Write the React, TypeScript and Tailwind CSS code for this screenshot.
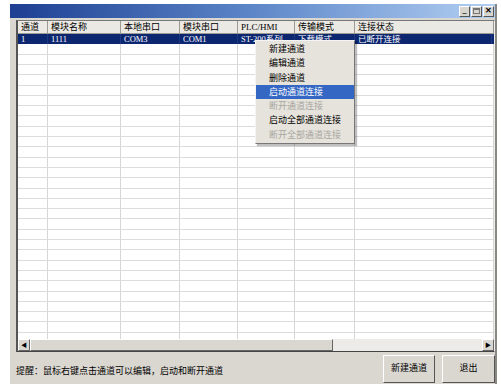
import React from "react"

const COLS = [
  { name: "通道", w: "w-[30px]" },
  { name: "模块名称", w: "w-[73px]" },
  { name: "本地串口", w: "w-[59px]" },
  { name: "模块串口", w: "w-[58px]" },
  { name: "PLC/HMI", w: "w-[57px]" },
  { name: "传输模式", w: "w-[60px]" },
  { name: "连接状态", w: "flex-1" },
]

const ROW = ["1", "1111", "COM3", "COM1", "ST-200系列", "下载模式", "已断开连接"]

const MENU = [
  { label: "新建通道" },
  { label: "编辑通道" },
  { label: "删除通道" },
  { label: "启动通道连接", active: true },
  { label: "断开通道连接", disabled: true },
  { label: "启动全部通道连接" },
  { label: "断开全部通道连接", disabled: true },
]

const font = "font-['Liberation_Serif','Noto_Sans_CJK_SC',serif]"

function TitleButton({ children }: { children: React.ReactNode }) {
  return (
    <div className="flex h-[11px] w-[11px] items-center justify-center border border-t-white border-l-white border-r-[#555] border-b-[#555] bg-[#d8d5ce] text-[8px] leading-none font-bold text-black">
      {children}
    </div>
  )
}

export default function App() {
  const emptyRows = Array.from({ length: 30 })

  return (
    <div className={`relative h-[387px] w-[501px] overflow-hidden bg-white ${font}`}>
      <div className="ml-[10px] mt-[4px] flex h-[380px] w-[487px] flex-col border-r-2 border-[#8a8883] bg-[#dad7d0]">
        {/* title bar */}
        <div className="flex h-[14px] items-center justify-end gap-[1px] bg-gradient-to-r from-[#1f3f92] via-[#5d86c8] to-[#b3d0f2] pr-[1px]">
          <TitleButton>_</TitleButton>
          <TitleButton>
            <span className="block h-[6px] w-[7px] border border-t-2 border-[#777]" />
          </TitleButton>
          <TitleButton>✕</TitleButton>
        </div>

        {/* list view */}
        <div className="ml-[6px] mt-[2px] flex h-[332px] w-[479px] flex-col border-l-2 border-t border-r border-b border-l-[#555] border-t-[#777] border-r-[#eee] border-b-[#444] bg-white">
          <div className="flex h-[13px] shrink-0 bg-[#ebe9e3] text-[9px] leading-[13px] text-black">
            {COLS.map((c) => (
              <div key={c.name} className={`${c.w} border-r border-b border-r-[#9d9a92] border-b-[#9d9a92] pl-[3px]`}>
                {c.name}
              </div>
            ))}
          </div>
          <div className="flex-1 overflow-hidden">
            <div className="flex h-[10.4px] bg-[#0c2670] text-[8.5px] leading-[10px] text-white">
              {COLS.map((c, i) => (
                <div key={c.name} className={`${c.w} border-r border-[#1c3880] pl-[3px] ${i === 6 ? "mr-[2px]" : ""}`}>
                  {ROW[i]}
                </div>
              ))}
            </div>
            {emptyRows.map((_, r) => (
              <div key={r} className="flex h-[10.3px] border-b border-[#dcdcdc]">
                {COLS.map((c) => (
                  <div key={c.name} className={`${c.w} border-r border-[#d6d6d6]`} />
                ))}
              </div>
            ))}
          </div>
          {/* horizontal scrollbar */}
          <div className="flex h-[12px] shrink-0 bg-[#ecebe7]">
            <div className="flex w-[12px] items-center justify-center border border-t-white border-l-white border-r-[#666] border-b-[#666] bg-[#dad7d0] text-[6px] text-black">◀</div>
            <div className="w-[303px] border border-t-white border-l-white border-r-[#666] border-b-[#666] bg-[#dad7d0]" />
            <div className="flex-1" />
            <div className="flex w-[12px] items-center justify-center border border-t-white border-l-white border-r-[#666] border-b-[#666] bg-[#dad7d0] text-[6px] text-black">▶</div>
          </div>
        </div>

        {/* footer */}
        <div className="ml-[6px] mt-[3px] flex items-center">
          <div className="flex-1 pt-[5px] text-[9px] text-black">提醒：鼠标右键点击通道可以编辑，启动和断开通道</div>
          <button className="flex h-[28px] w-[52px] items-center justify-center border border-t-white border-l-white border-r-[#555] border-b-[#555] bg-[#dad7d0] text-[9px] text-black">
            新建通道
          </button>
          <button className="ml-[7px] mr-[0px] flex h-[28px] w-[53px] items-center justify-center border border-t-white border-l-white border-r-[#555] border-b-[#555] bg-[#dad7d0] text-[9px] text-black">
            退出
          </button>
        </div>
      </div>

      {/* context menu */}
      <div className="absolute left-[255px] top-[40px] w-[100px] border border-t-[#f4f4f4] border-l-[#f4f4f4] border-r-[#777] border-b-[#777] bg-[#e6e3dc] py-[1px] shadow-[2px_2px_1px_rgba(0,0,0,0.25)]">
        {MENU.map((m) => (
          <div
            key={m.label}
            className={`h-[14.3px] pl-[13px] text-[9px] leading-[14.3px] ${
              m.active ? "bg-[#3467c4] text-white" : m.disabled ? "text-[#a8a69f]" : "text-black"
            }`}
          >
            {m.label}
          </div>
        ))}
      </div>
    </div>
  )
}
